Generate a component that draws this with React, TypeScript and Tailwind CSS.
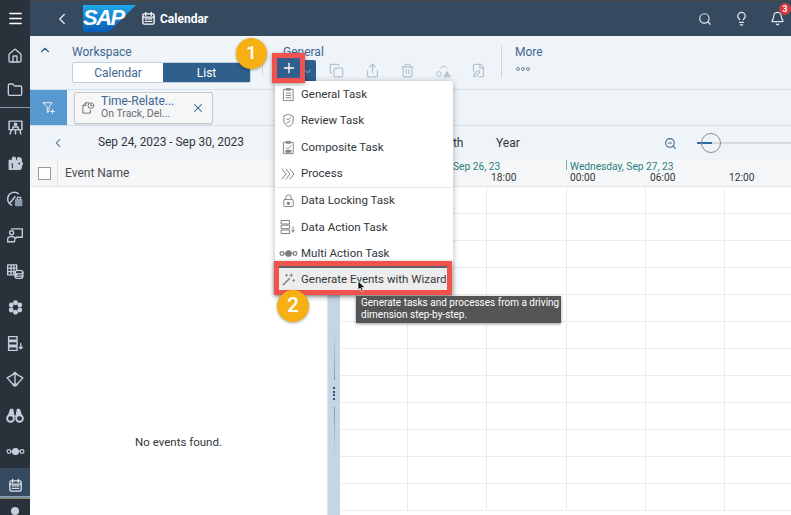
import React from "react";
import { Search, Lightbulb, Bell, ChevronLeft, ChevronUp, ChevronDown, X, ZoomOut, Plus, Home, Folder, Menu, Copy, Share, Trash2, FilePen } from "lucide-react";

const S = ({ size = 16, className = "", children }: { size?: number; className?: string; children: React.ReactNode }) => (
  <svg width={size} height={size} viewBox="0 0 16 16" fill="none" stroke="currentColor" strokeWidth="1" strokeLinecap="round" strokeLinejoin="round" className={className}>{children}</svg>
);
const Cal = ({ size = 14, className = "" }: { size?: number; className?: string }) => (
  <S size={size} className={className}>
    <rect x="2" y="3" width="12" height="11" rx="1.5" strokeWidth="1.4" />
    <path d="M5 1.5v3M11 1.5v3M2 6.5h12" strokeWidth="1.4" />
    <path d="M4.5 8.5h1.5M7.3 8.5h1.5M10 8.5h1.5M4.5 11h1.5M7.3 11h1.5M10 11h1.5" strokeWidth="1.3" />
  </S>
);

const side: React.ReactNode[] = [
  <S size={17}><rect x="2" y="2" width="12" height="8" strokeWidth="1.4" /><circle cx="8" cy="5" r="1.3" fill="currentColor" /><path d="M5.5 10V7.5h5V10M4 10l-1 4M12 10l1 4M8 10v4" strokeWidth="1.4" /></S>,
  <S size={17}><path d="M2 5h3V3.5a1.5 1.5 0 0 1 3 0V5h2V2.5h1.5a2 2 0 0 1 2 2v2a2 2 0 0 1 0 3.5v2a2 2 0 0 1-2 1.5H2z" fill="currentColor" /><circle cx="11.5" cy="8" r="1.4" fill="#29313a" /><path d="M5 8v4" stroke="#29313a" /></S>,
  <S size={18}><path d="M11 3.2A6 6 0 1 0 5 13.5" strokeWidth="1.3" /><path d="M4 11l4-5" strokeWidth="1.3" /><rect x="8" y="8" width="6.5" height="6.5" rx="1" fill="#8a9cb0" stroke="none" /><path d="M10 8V6.5h3V8" strokeWidth="1" /></S>,
  <S size={18}><circle cx="5" cy="6" r="1.8" strokeWidth="1.2" /><path d="M1.5 14v-2.5a2.5 2.5 0 0 1 2.5-2h2l3 1.2" strokeWidth="1.2" /><path d="M1.5 14h6l.5-3" strokeWidth="1.2" /><path d="M5 2.5h9.5v7.5H9" strokeWidth="1.2" /></S>,
  <S size={18}><path d="M1.5 2.5h8v9h-8zM1.5 5.5h8M1.5 8.5h8M4.5 2.5v9M7 2.5v9" strokeWidth="1.2" /><ellipse cx="11.5" cy="9" rx="3.5" ry="1.6" fill="#29313a" strokeWidth="1.2" /><path d="M8 9v4c0 1 1.5 1.6 3.5 1.6S15 14 15 13V9M8 11c0 1 1.5 1.6 3.5 1.6S15 12 15 11" strokeWidth="1.2" /></S>,
  <S size={17}><circle cx="8" cy="3.5" r="2.3" fill="#c5d0dc" stroke="none" /><circle cx="8" cy="12.5" r="2.3" fill="#c5d0dc" stroke="none" /><circle cx="4" cy="5.7" r="2.3" fill="#c5d0dc" stroke="none" /><circle cx="12" cy="5.7" r="2.3" fill="#c5d0dc" stroke="none" /><circle cx="4" cy="10.3" r="2.3" fill="#c5d0dc" stroke="none" /><circle cx="12" cy="10.3" r="2.3" fill="#c5d0dc" stroke="none" /><circle cx="8" cy="8" r="2.2" fill="#29313a" stroke="none" /></S>,
  <S size={17}><rect x="1.5" y="1.5" width="8" height="3.5" strokeWidth="1.3" /><rect x="1.5" y="6.2" width="8" height="3.5" strokeWidth="1.3" /><rect x="1.5" y="11" width="8" height="3.5" strokeWidth="1.3" /><path d="M13 8v5M11.5 11.5 13 13l1.5-1.5" strokeWidth="1.2" /></S>,
  <S size={18}><path d="M1 7l7-4 7 4-5 5.5H6z" strokeWidth="1.2" /><path d="M8 2v12M6 4l2-2 2 2M6 13l2 1.5 2-1.5" strokeWidth="1.2" /></S>,
  <S size={18}><circle cx="4" cy="11" r="3" strokeWidth="1.6" /><circle cx="12" cy="11" r="3" strokeWidth="1.6" /><path d="M2 9l2-6h2l1 6h2l1-6h2l2 6" fill="currentColor" strokeWidth="1" /></S>,
  <S size={19}><circle cx="2.5" cy="8" r="1.6" /><circle cx="8" cy="8" r="2.5" fill="currentColor" /><circle cx="13.5" cy="8" r="1.6" /><path d="M4.1 8h1.4M10.5 8h1.4" /></S>,
];

const Item = ({ icon, label, className = "" }: { icon: React.ReactNode; label: string; className?: string }) => (
  <div className={`flex h-[26.3px] items-center ${className}`}>
    <div className="flex w-[26px] shrink-0 justify-center text-[#7d8083]">{icon}</div>
    <span className="whitespace-nowrap text-[11.5px] text-[#32363a]">{label}</span>
  </div>
);

const Tool = ({ children }: { children: React.ReactNode }) => (
  <div className="flex w-[35.5px] justify-center text-[#b4c3d2]">{children}</div>
);

export default function App() {
  return (
    <div className="relative flex h-[515px] w-[791px] overflow-hidden bg-white font-['Roboto','Noto_Sans',sans-serif] text-[#32363a]">
      {/* side rail */}
      <aside className="flex w-[30px] shrink-0 flex-col items-center overflow-hidden bg-[#29313a] text-[#c5d0dc]">
        <div className="flex h-9 w-full shrink-0 items-center justify-center text-white"><Menu size={17} /></div>
        <div className="flex h-9 w-full shrink-0 items-center justify-center pt-[3px]"><Home size={16} /></div>
        <div className="flex h-[35px] w-full shrink-0 items-center justify-center pt-[1px]"><Folder size={16} /></div>
        <div className="h-px w-full shrink-0 bg-[#8b96a2]" />
        {side.map((icon, i) => (
          <div key={i} className="flex h-9 w-full shrink-0 items-center justify-center pt-[2px]">{icon}</div>
        ))}
        <div className="flex h-[29px] w-full shrink-0 items-center justify-center border-b border-[#7fa3c4] bg-[#354a5f] pt-[7px] text-[#dfe6ee]"><Cal size={15} /></div>
        <div className="h-[2px] w-full shrink-0 bg-[#8b8b85]" />
        <div className="flex h-9 w-full shrink-0 justify-center pt-2"><div className="h-2 w-2 rounded-full bg-[#c5d0dc]" /></div>
      </aside>

      <main className="flex min-w-0 flex-1 flex-col">
        {/* shell bar */}
        <header className="flex h-9 shrink-0 items-center border-t border-[#4a4a48] bg-[#354a5f] text-white">
          <ChevronLeft size={18} strokeWidth={1.8} className="ml-[23px] text-[#dfe6ee]" />
          <div className="relative ml-[12px] h-[27px] w-[53px] shrink-0">
            <svg width="53" height="27" viewBox="0 0 53 27" className="absolute inset-0">
              <defs><linearGradient id="sapg" x1="0" y1="0" x2="0" y2="1"><stop offset="0" stopColor="#1ea9ea" /><stop offset="1" stopColor="#0a5bb5" /></linearGradient></defs>
              <polygon points="0,0 53,0 26,27 0,27" fill="url(#sapg)" />
            </svg>
            <span className="absolute left-[0px] top-[-1px] font-['Liberation_Sans',sans-serif] text-[22px] font-bold italic leading-[28px] tracking-[-1.5px] text-white">SAP</span>
          </div>
          <Cal size={15} className="ml-[5px] text-white" />
          <span className="ml-[4px] text-[12px] font-bold">Calendar</span>
          <div className="ml-auto flex items-center text-[#dfe6ee]">
            <Search size={14} className="mr-[22px]" />
            <Lightbulb size={15} className="mr-[21px]" />
            <Bell size={15} className="mr-[6px]" />
          </div>
        </header>

        {/* toolbar */}
        <section className="flex h-[54px] shrink-0 border-b border-[#d5e0ec] bg-[#eff4f9] text-[#3d6690]">
          <ChevronUp size={14} className="ml-[8px] mt-[7px] shrink-0 text-[#2f5f8c]" />
          <div className="ml-[20px] mt-[9px] w-[179px] shrink-0">
            <div className="text-[12px] leading-[14px]">Workspace</div>
            <div className="mt-[3px] flex h-[21px] overflow-hidden rounded-[2px] border border-[#bfcfdf] text-[12px]">
              <div className="flex w-[90px] items-center justify-center bg-white">Calendar</div>
              <div className="flex flex-1 items-center justify-center bg-[#2f5f8c] text-white">List</div>
            </div>
          </div>
          <div className="ml-[11px] mt-[25px] h-[14px] w-px bg-[#c8d5e2]" />
          <div className="ml-[20px] mt-[9px] w-[218px] shrink-0">
            <div className="text-[12px] leading-[14px]">General</div>
            <div className="mt-[1px] flex items-center">
              <div className="-ml-[6px] flex h-[22px] w-[39px] items-center justify-end rounded-[2px] bg-[#2f5f8c] pr-[3px] text-[#b9cbdc]"><ChevronDown size={11} /></div>
              <div className="ml-[3px] flex">
                <Tool><Copy size={15} /></Tool>
                <Tool><Share size={15} /></Tool>
                <Tool><Trash2 size={15} /></Tool>
                <Tool><S size={16}><circle cx="4" cy="11" r="2.4" /><path d="M9 13.5l3-5 3 5z" fill="currentColor" /><path d="M5 6a4 4 0 0 1 6-2l1 1" /></S></Tool>
                <Tool><FilePen size={15} /></Tool>
              </div>
            </div>
          </div>
          <div className="mt-[10px] h-[32px] w-px bg-[#c8d5e2]" />
          <div className="ml-[13px] mt-[9px]">
            <div className="text-[12px] leading-[14px]">More</div>
            <div className="mt-[3px] flex h-[14px] items-center gap-[1.5px] pl-px">
              <span className="h-[3.5px] w-[3.5px] rounded-full border border-[#6e87a0]" />
              <span className="h-[3.5px] w-[3.5px] rounded-full border border-[#6e87a0]" />
              <span className="h-[3.5px] w-[3.5px] rounded-full border border-[#6e87a0]" />
            </div>
          </div>
        </section>

        {/* filter row */}
        <section className="flex h-9 shrink-0 items-center border-b border-[#d5e0ec] bg-[#eff4f9]">
          <div className="flex h-full w-[37px] items-center justify-center bg-[#5899d0] text-white">
            <S size={14}><path d="M1.5 2h10L8 7v5l-2 1V7z" /><path d="M12 10v4M10 12h4" /></S>
          </div>
          <div className="ml-[7px] flex h-[32px] w-[139px] items-center rounded-[2px] border border-[#c9c9c9] bg-[#f5f6f7] shadow-[0_1px_1px_rgba(0,0,0,0.1)]">
            <S size={15} className="ml-[6px] text-[#6a6d70]"><path d="M8 3H5L2 6v8h8v-3" /><path d="M2 6h3V3" /><circle cx="10.5" cy="6" r="3" /><path d="M10.5 4.5V6h1.2" /></S>
            <div className="ml-[5px] w-[85px]">
              <div className="whitespace-nowrap text-[12px] leading-[13px] text-[#3d6690]">Time-Relate...</div>
              <div className="whitespace-nowrap text-[10.5px] leading-[12px] text-[#6a6d70]">On Track, Del...</div>
            </div>
            <X size={14} strokeWidth={1.8} className="ml-[5px] text-[#2f5f8c]" />
          </div>
        </section>

        {/* date row */}
        <section className="flex h-[34px] shrink-0 items-center bg-[#eff4f9] pr-0">
          <ChevronLeft size={14} strokeWidth={1.8} className="ml-[21px] text-[#2f5f8c]" />
          <span className="ml-[33px] w-[145px] shrink-0 whitespace-nowrap text-[11.9px]">Sep 24, 2023 - Sep 30, 2023</span>
          <span className="ml-[186px] w-[37px] shrink-0 text-[12px]">Month</span>
          <span className="ml-[30px] w-[24px] shrink-0 text-[12px]">Year</span>
          <ZoomOut size={13} className="ml-[144px] shrink-0 text-[#3d6690]" />
          <div className="relative ml-[20px] h-[2px] flex-1 bg-[#d9d9d9]">
            <div className="absolute left-0 top-0 h-[2px] w-[15px] bg-[#2f6aa5]" />
            <div className="absolute left-[4px] top-[-9px] h-5 w-5 rounded-full border-[1.5px] border-[#8b8b8b]" />
          </div>
        </section>

        {/* content */}
        <section className="flex min-h-0 flex-1">
          <div className="flex w-[297px] shrink-0 flex-col">
            <div className="flex h-[27px] shrink-0 items-center border-b border-[#e5e5e5] bg-[#f5f6f7]">
              <div className="ml-[8px] h-[13px] w-[13px] border border-[#9a9a9a] bg-white" />
              <div className="ml-[6px] h-full w-px bg-[#e0e0e0]" />
              <span className="ml-[7px] text-[12px] text-[#4a4d50]">Event Name</span>
            </div>
            <div className="flex flex-1 items-center justify-center pt-[184px]"><span className="text-[11.5px]">No events found.</span></div>
          </div>

          <div className="flex w-[13px] shrink-0 flex-col items-center justify-center border-l border-[#e6e6e6] bg-[#c6d5e6] pt-[112px]">
            <div className="h-[50px] w-px bg-gradient-to-b from-[#c6d5e6] to-[#7f9dc0]" />
            <div className="my-[7px] flex flex-col gap-[1.5px]">
              {[0, 1, 2, 3].map((i) => <div key={i} className="h-[2px] w-[2px] bg-[#2f5073]" />)}
            </div>
            <div className="h-[50px] w-px bg-gradient-to-b from-[#7f9dc0] to-[#c6d5e6]" />
          </div>

          <div className="min-w-0 flex-1 overflow-hidden">
            <div className="relative flex h-[27px] border-b border-[#e5e5e5] bg-[#f5f6f7] text-[10.2px] leading-[11px]">
              <span className="absolute left-[113px] top-[1px] whitespace-nowrap text-[#2a7f7f]">Sep 26, 23</span>
              <span className="absolute left-[151px] top-[12px]">18:00</span>
              <span className="absolute left-[226px] top-0 h-[10px] w-px bg-[#7fb0a8]" />
              <span className="absolute left-[230px] top-[1px] whitespace-nowrap text-[#2a7f7f]">Wednesday, Sep 27, 23</span>
              <span className="absolute left-[230px] top-[12px]">00:00</span>
              <span className="absolute left-[310px] top-[12px]">06:00</span>
              <span className="absolute left-[389px] top-[12px]">12:00</span>
            </div>
            {Array.from({ length: 12 }).map((_, r) => (
              <div key={r} className="flex h-[27px] border-b border-[#ececec]">
                <div className="w-[68px] shrink-0 border-r border-[#ececec]" />
                {[0, 1, 2, 3, 4].map((c) => (
                  <div key={c} className="w-[79.3px] shrink-0 border-r border-[#ececec]" />
                ))}
              </div>
            ))}
          </div>
        </section>
      </main>

      {/* notification badge */}
      <div className="absolute left-[779px] top-[3px] flex h-[12px] w-[12px] items-center justify-center rounded-full bg-[#d9363e] text-[8.5px] font-bold text-white">3</div>

      {/* dropdown menu */}
      <div className="absolute left-[275px] top-[81px] h-[214px] w-[178px] rounded-[3px] bg-white pt-[0.5px] shadow-[0_1px_6px_rgba(0,0,0,0.3)]">
        <Item label="General Task" icon={<S size={15}><rect x="3" y="2.5" width="10" height="12" /><path d="M6 1.5h4v2H6zM5.5 6.5h5M5.5 9h5M5.5 11.5h5" /></S>} />
        <Item label="Review Task" icon={<S size={15}><path d="M8 1.5l5 2v5c0 3-2.5 5-5 6-2.5-1-5-3-5-6v-5z" /><path d="M6 6l1.5 1.5L10 5M6 11l4-2.5" /></S>} />
        <Item label="Composite Task" icon={<S size={15}><rect x="3" y="2.5" width="10" height="12" /><path d="M6 1.5h4v2H6zM5.5 8l1.5 1.5L10.5 6" /><rect x="5.5" y="11" width="5" height="2" fill="currentColor" /></S>} />
        <Item label="Process" icon={<S size={16}><path d="M2 3l4 5-4 5M6 3l4 5-4 5M10 3l4 5-4 5" /></S>} />
        <div className="h-px bg-[#e5e5e5]" />
        <Item label="Data Locking Task" icon={<S size={15}><rect x="3" y="7" width="10" height="7.5" rx="1" /><path d="M5 7V5a3 3 0 0 1 6 0v2" /><rect x="7" y="10" width="2" height="2" fill="currentColor" /></S>} />
        <Item label="Data Action Task" icon={<S size={16}><rect x="1.5" y="1.5" width="8" height="3.5" /><rect x="1.5" y="6.2" width="8" height="3.5" /><rect x="1.5" y="11" width="8" height="3.5" /><path d="M13 8v5M11.5 11.5 13 13l1.5-1.5" /></S>} />
        <Item label="Multi Action Task" icon={<S size={19}><circle cx="2.5" cy="8" r="1.6" /><circle cx="8" cy="8" r="2.3" fill="currentColor" /><circle cx="13.5" cy="8" r="1.6" /><path d="M4.1 8h1.5M10.4 8h1.5" /></S>} />
        <Item label="Generate Events with Wizard" className="bg-[#ededed]" icon={<S size={15}><path d="M2.5 13.5L9 7" strokeWidth="1.6" /><path d="M11 2v3M9.5 3.5h3M13.5 8v2M12.5 9h2M6 2.5v2M5 3.5h2" /></S>} />
      </div>

      {/* callouts */}
      <div className="absolute left-[272px] top-[53px] flex h-[30px] w-[33px] items-center justify-center border-[5px] border-[#f0524c] bg-[#2f5f8c] text-white shadow-[0_1px_4px_rgba(0,0,0,0.4)]"><Plus size={16} strokeWidth={2} /></div>
      <div className="absolute left-[274px] top-[261px] h-[34px] w-[178px] border-[5px] border-[#f0524c] shadow-[0_1px_4px_rgba(0,0,0,0.4)]"><div className="h-[2px] bg-[#5e6165]" /></div>
      <div className="absolute left-[236px] top-[38px] flex h-[31px] w-[31px] items-center justify-center rounded-full bg-[#f7b014] text-[19px] font-medium text-white shadow-[0_1px_3px_rgba(0,0,0,0.35)]">1</div>
      <div className="absolute left-[277px] top-[290px] flex h-[32px] w-[32px] items-center justify-center rounded-full bg-[#f7b014] text-[21px] font-medium text-white shadow-[0_1px_3px_rgba(0,0,0,0.35)]">2</div>

      {/* tooltip */}
      <div className="absolute left-[356px] top-[296px] h-[27px] w-[205px] bg-[#555555] px-[5px] pt-[1px] text-[10px] leading-[12px] text-white shadow-[0_1px_3px_rgba(0,0,0,0.4)]">
        <div className="whitespace-nowrap">Generate tasks and processes from a driving</div>
        <div className="whitespace-nowrap">dimension step-by-step.</div>
      </div>

      {/* cursor */}
      <svg width="9" height="13" viewBox="0 0 9 13" className="absolute left-[357px] top-[280px]">
        <path d="M1 1v9l2.2-2 1.5 3.5 1.6-.7L4.8 7.4H8z" fill="#111" stroke="#fff" strokeWidth="0.7" />
      </svg>
    </div>
  );
}
